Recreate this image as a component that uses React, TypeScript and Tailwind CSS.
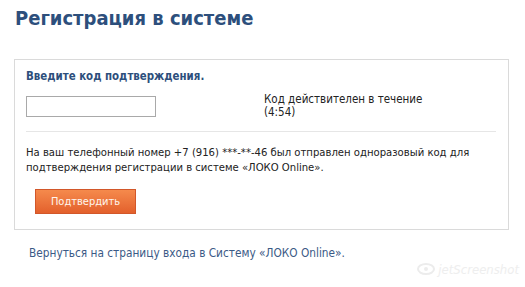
import React from "react";

export default function App() {
  return (
    <div className="w-[525px] h-[287px] bg-white overflow-hidden relative" style={{ fontFamily: "'DejaVu Sans Condensed', 'DejaVu Sans', Verdana, sans-serif" }}>
      <h1 className="pl-[15px] pt-[6px] text-[20px] leading-[24px] font-bold text-[#2d4f7c]">
        Регистрация в системе
      </h1>
      <div className="ml-[14px] mt-[29px] w-[495px] h-[171px] border border-[#dadada] px-[11px] pt-[8px]">
        <div className="text-[11.4px] leading-[16px] font-bold text-[#2d4f7c]">Введите код подтверждения.</div>
        <div className="flex mt-[12px] h-[35px]">
          <input type="text" className="w-[130px] h-[21px] border border-[#a9a9a9] bg-white outline-none" />
          <div className="ml-[108px] -mt-[3px] text-[11.5px] leading-[13px] text-[#222]">
            <div>Код действителен в течение</div>
            <div>(4:54)</div>
          </div>
        </div>
        <div className="border-t border-[#e6e6e6] mr-[1px]" />
        <p className="mt-[13px] text-[11.2px] leading-[15px] text-[#222]">
          На ваш телефонный номер +7 (916) ***-**-46 был отправлен одноразовый код для подтверждения регистрации в системе «ЛОКО Online».
        </p>
        <button className="mt-[14px] ml-[9px] w-[101px] h-[25px] border border-[#d2572a] bg-gradient-to-b from-[#f58a4c] to-[#e3602c] text-[#fff6ee] text-[11px] leading-[23px]">
          Подтвердить
        </button>
      </div>
      <div className="mt-[16px] ml-[29px] text-[11.75px] leading-[15px] text-[#3b5a86]">
        Вернуться на страницу входа в Систему «ЛОКО Online».
      </div>
      <div className="absolute right-[6px] bottom-[8px] flex items-center gap-[3px] text-[#eeeeee] italic text-[13px]">
        <svg width="18" height="12" viewBox="0 0 18 12"><ellipse cx="9" cy="6" rx="8" ry="5" fill="none" stroke="#ececec" strokeWidth="2" /><circle cx="9" cy="6" r="2" fill="#ececec" /></svg>
        <span>jetScreenshot</span>
      </div>
    </div>
  );
}
